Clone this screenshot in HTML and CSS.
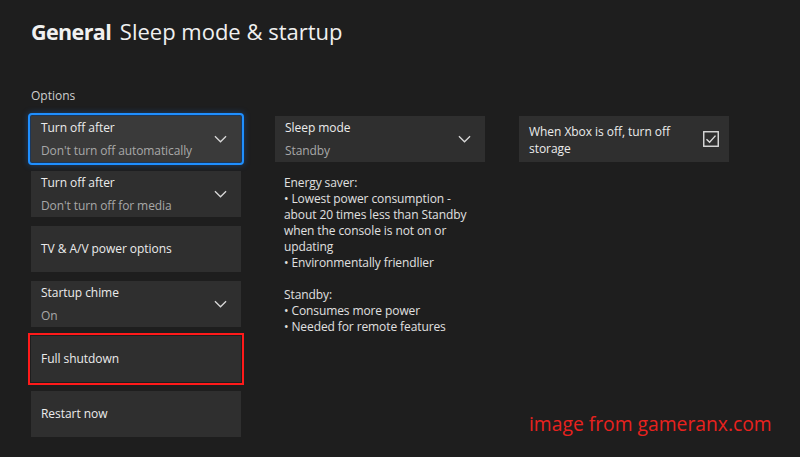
FILE: index.html
```html
<!DOCTYPE html>
<html>
<head>
<meta charset="utf-8">
<link rel="stylesheet" href="styles.css">
</head>
<body>
<div class="page">
  <h1 class="title"><span class="bold">General</span> <span class="light">Sleep mode &amp; startup</span></h1>
  <div class="section-label">Options</div>
  <div class="columns">
    <div class="col">
      <div class="card focused">
        <div class="text"><div class="label">Turn off after</div><div class="value">Don't turn off automatically</div></div>
        <svg class="chev" viewBox="0 0 14 8"><path d="M1 1 L7 7 L13 1" /></svg>
      </div>
      <div class="card">
        <div class="text"><div class="label">Turn off after</div><div class="value">Don't turn off for media</div></div>
        <svg class="chev" viewBox="0 0 14 8"><path d="M1 1 L7 7 L13 1" /></svg>
      </div>
      <div class="card">
        <div class="text"><div class="label">TV &amp; A/V power options</div></div>
      </div>
      <div class="card">
        <div class="text"><div class="label">Startup chime</div><div class="value">On</div></div>
        <svg class="chev" viewBox="0 0 14 8"><path d="M1 1 L7 7 L13 1" /></svg>
      </div>
      <div class="card marked">
        <div class="text"><div class="label">Full shutdown</div></div>
      </div>
      <div class="card">
        <div class="text"><div class="label">Restart now</div></div>
      </div>
    </div>
    <div class="col">
      <div class="card">
        <div class="text"><div class="label">Sleep mode</div><div class="value">Standby</div></div>
        <svg class="chev" viewBox="0 0 14 8"><path d="M1 1 L7 7 L13 1" /></svg>
      </div>
      <div class="desc">
        <p>Energy saver:<br>• Lowest power consumption - about 20 times less than Standby when the console is not on or updating<br>• Environmentally friendlier</p>
        <p>Standby:<br>• Consumes more power<br>• Needed for remote features</p>
      </div>
    </div>
    <div class="col">
      <div class="card check-card">
        <div class="text"><div class="label two">When Xbox is off, turn off storage</div></div>
        <svg class="check" viewBox="0 0 16 16"><rect x="0.75" y="0.75" width="14.5" height="14.5" /><path d="M3.5 8.2 L6.6 11.2 L12.5 4.6" /></svg>
      </div>
    </div>
  </div>
  <div class="watermark">image from gameranx.com</div>
</div>
</body>
</html>
```
FILE: styles.css
```css
html, body {
  margin: 0;
  padding: 0;
  background: #1e1e1e;
}
body {
  width: 800px;
  height: 457px;
  overflow: hidden;
  font-family: "Open Sans", "Noto Sans", sans-serif;
  color: #e8e8e8;
}
.page {
  position: relative;
  padding: 16px 0 0 31px;
  height: 441px;
}
.title {
  margin: 0;
  font-size: 21.5px;
  line-height: 30px;
  font-weight: 400;
  color: #f0f0f0;
}
.title .bold {
  font-weight: 700;
  letter-spacing: -0.6px;
  margin-right: 3px;
}
.title .light {
  font-size: 22px;
  letter-spacing: 0;
}
.section-label {
  margin-top: 41px;
  font-size: 12px;
  line-height: 16px;
  color: #cfcfcf;
}
.columns {
  display: flex;
  gap: 34px;
  margin-top: 12px;
}
.col {
  width: 210px;
  display: flex;
  flex-direction: column;
  gap: 9px;
}
.card {
  height: 46px;
  background: #2f2f2f;
  display: flex;
  align-items: center;
  justify-content: space-between;
  padding: 0 14px 0 10px;
  box-sizing: border-box;
}
.card.focused {
  background: #3a3a3a;
  outline: 2px solid #1f8fff;
  outline-offset: 1px;
  border-radius: 1px;
  box-shadow: 0 0 6px 3px rgba(30, 130, 255, 0.35);
}
.card.marked {
  outline: 2px solid #ff1a1a;
  outline-offset: 1px;
}
.label {
  font-size: 12px;
  line-height: 16px;
  color: #ececec;
  letter-spacing: -0.05px;
}
.value {
  font-size: 12px;
  line-height: 16px;
  color: #a8a8a8;
  margin-top: 7px;
  letter-spacing: -0.1px;
}
.label.two {
  line-height: 17px;
  margin-top: 1px;
}
.chev {
  width: 13px;
  height: 8px;
  fill: none;
  stroke: #d8d8d8;
  stroke-width: 1.4;
  flex: none;
}
.check-card {
  padding-right: 10px;
}
.check {
  width: 16px;
  height: 16px;
  fill: none;
  stroke: #dcdcdc;
  stroke-width: 1.4;
  flex: none;
}
.desc {
  width: 188px;
  padding: 4px 0 0 9px;
  font-size: 12px;
  line-height: 16px;
  color: #e0e0e0;
  letter-spacing: -0.1px;
}
.desc p {
  margin: 0 0 16px 0;
}
.watermark {
  position: absolute;
  left: 529px;
  top: 411px;
  font-size: 19.3px;
  line-height: 26px;
  color: #e8221e;
}
```
